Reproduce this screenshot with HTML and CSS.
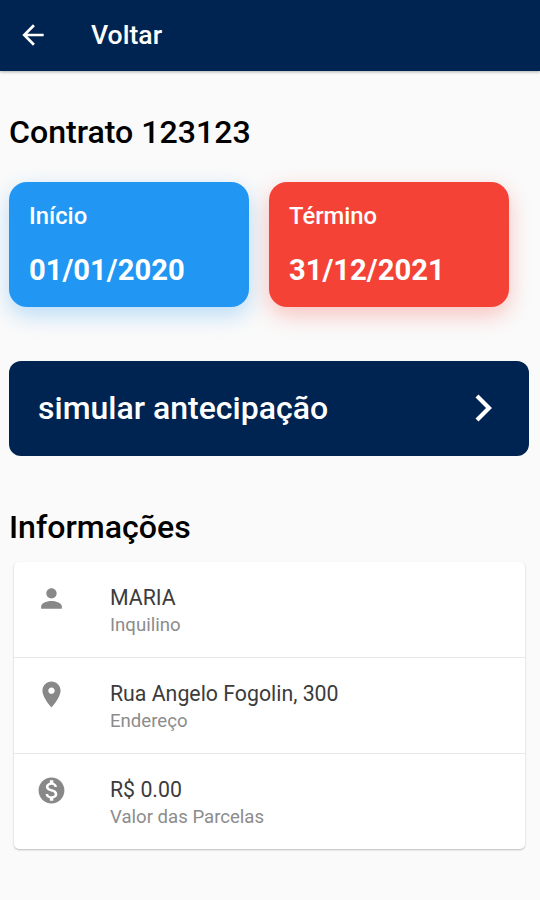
FILE: index.html
```html
<!DOCTYPE html>
<html lang="pt-br">
<head>
  <meta charset="UTF-8" />
  <meta name="viewport" content="width=device-width, initial-scale=1.0"/>
  <title>Contrato</title>
  <link rel="stylesheet" href="styles.css">
</head>
<body>
  <header class="topo">
    <svg class="voltar" viewBox="0 0 24 24"><path d="M20 11H7.83l5.59-5.59L12 4l-8 8 8 8 1.41-1.41L7.83 13H20v-2z"/></svg>
    <span>Voltar</span>
  </header>

  <main>
    <h1>Contrato 123123</h1>

    <div class="datas">
      <div class="data inicio">
        <span>Início</span>
        <strong>01/01/2020</strong>
      </div>
      <div class="data termino">
        <span>Término</span>
        <strong>31/12/2021</strong>
      </div>
    </div>

    <button class="simular">
      <span>simular antecipação</span>
      <svg class="seta" viewBox="0 0 24 24"><path d="M6 4l8 8-8 8"/></svg>
    </button>

    <h2>Informações</h2>

    <div class="lista">
      <div class="item">
        <svg viewBox="0 0 24 24"><path d="M12 12c2.21 0 4-1.79 4-4s-1.79-4-4-4-4 1.79-4 4 1.79 4 4 4zm0 2c-2.67 0-8 1.34-8 4v2h16v-2c0-2.66-5.33-4-8-4z"/></svg>
        <div>
          <p class="valor">MARIA</p>
          <p class="rotulo">Inquilino</p>
        </div>
      </div>
      <div class="item">
        <svg viewBox="0 0 24 24"><path d="M12 2C8.13 2 5 5.13 5 9c0 5.25 7 13 7 13s7-7.75 7-13c0-3.87-3.13-7-7-7zm0 9.5c-1.38 0-2.5-1.12-2.5-2.5s1.12-2.5 2.5-2.5 2.5 1.12 2.5 2.5-1.12 2.5-2.5 2.5z"/></svg>
        <div>
          <p class="valor">Rua Angelo Fogolin, 300</p>
          <p class="rotulo">Endereço</p>
        </div>
      </div>
      <div class="item">
        <svg viewBox="0 0 24 24"><path d="M12 2C6.48 2 2 6.48 2 12s4.48 10 10 10 10-4.48 10-10S17.52 2 12 2zm1.41 16.09V20h-2.67v-1.93c-1.71-.36-3.16-1.46-3.27-3.4h1.96c.1 1.05.82 1.87 2.65 1.87 1.96 0 2.4-.98 2.4-1.59 0-.83-.44-1.61-2.67-2.14-2.48-.6-4.18-1.62-4.18-3.67 0-1.72 1.39-2.84 3.11-3.21V4h2.67v1.95c1.86.45 2.79 1.86 2.85 3.39H14.3c-.05-1.11-.64-1.87-2.22-1.87-1.5 0-2.4.68-2.4 1.64 0 .84.65 1.39 2.67 1.91s4.18 1.39 4.18 3.91c-.01 1.83-1.38 2.83-3.12 3.16z"/></svg>
        <div>
          <p class="valor">R$ 0.00</p>
          <p class="rotulo">Valor das Parcelas</p>
        </div>
      </div>
    </div>
  </main>
</body>
</html>
```

FILE: styles.css
```css
body {
  margin: 0;
  background-color: #fafafa;
  font-family: Roboto, sans-serif;
  color: #000;
}
.topo {
  display: flex;
  align-items: center;
  height: 71px;
  box-sizing: border-box;
  padding: 0 0 2px 17px;
  background-color: #002451;
  color: white;
  font-size: 26.6px;
  font-weight: 500;
  box-shadow: 0 1px 3px rgba(0,0,0,0.3);
}
.voltar {
  width: 32px;
  height: 32px;
  margin-right: 42px;
  fill: white;
}
main {
  padding: 40px 11px 30px 9px;
}
h1, h2 {
  margin: 0;
  font-size: 32.1px;
  line-height: 42px;
  font-weight: 500;
}
.datas {
  display: flex;
  gap: 20px;
  margin-top: 29px;
}
.data {
  width: 240px;
  height: 125px;
  box-sizing: border-box;
  padding: 20px;
  border-radius: 18px;
  color: white;
}
.data span, .data strong {
  display: block;
}
.data span {
  font-size: 23.8px;
  line-height: 28px;
  font-weight: 500;
}
.data strong {
  margin-top: 22px;
  font-size: 29.2px;
  line-height: 36px;
}
.inicio {
  background-color: #2196f3;
  box-shadow: 0 8px 22px rgba(33,150,243,0.3);
}
.termino {
  background-color: #f44336;
  box-shadow: 0 8px 22px rgba(244,67,54,0.3);
}
.simular {
  display: flex;
  align-items: center;
  justify-content: space-between;
  width: 100%;
  height: 95px;
  margin: 53.5px 0 50.5px;
  padding: 0 25px 0 29px;
  border: none;
  border-radius: 12px;
  background-color: #002451;
  color: white;
  font-family: inherit;
  font-size: 32px;
  font-weight: 500;
}
.seta {
  width: 36px;
  height: 36px;
  fill: none;
  stroke: white;
  stroke-width: 2.8;
}
.lista {
  margin: 14px 4px 0 5px;
  border-radius: 5px;
  background-color: white;
  box-shadow: 0 1px 2px rgba(0,0,0,0.25);
}
.item {
  display: flex;
  height: 95px;
  box-sizing: border-box;
  padding: 21px 22px 0;
}
.item + .item {
  height: 96px;
  border-top: 1px solid #e8e8e8;
}
.item svg {
  width: 31px;
  height: 31px;
  margin-right: 43px;
  fill: #888;
}
.item p {
  margin: 0;
}
.valor {
  color: #3c3c3c;
  font-size: 21.3px;
  line-height: 30px;
}
.rotulo {
  color: #8c8c8c;
  font-size: 18.6px;
  line-height: 25px;
}
```
